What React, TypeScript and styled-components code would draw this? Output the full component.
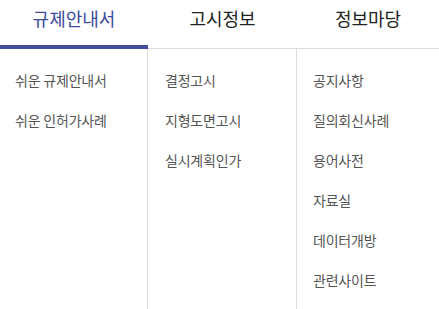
import React from 'react';
import styled, { createGlobalStyle } from 'styled-components';

const GlobalStyle = createGlobalStyle`
  html, body {
    margin: 0;
    padding: 0;
    background: #ffffff;
  }
  body {
    font-family: 'Noto Sans CJK KR', 'Noto Sans', sans-serif;
  }
`;

const Styled_Menu = styled.div`
  width: 439px;
  height: 309px;
  display: flex;
  flex-direction: column;
  overflow: hidden;
  background: #ffffff;
`;

const Styled_TabBar = styled.div`
  display: grid;
  grid-template-columns: 148px 149px 1fr;
  height: 49px;
  border-bottom: 1px solid #dcdcdc;
  box-sizing: border-box;
`;

interface Styled_TabProps {
  active?: boolean;
}

const Styled_Tab = styled.div<Styled_TabProps>`
  display: flex;
  justify-content: center;
  align-items: flex-start;
  padding-top: 5px;
  box-sizing: border-box;
  height: 49px;
  margin-bottom: -1px;
  font-size: 18px;
  font-weight: 400;
  color: ${({ active }) => (active ? '#3b4a9c' : '#222222')};
  border-bottom: ${({ active }) => (active ? '4px solid #414c9c' : 'none')};
`;

const Styled_Body = styled.div`
  flex: 1;
  display: grid;
  grid-template-columns: 147px 149px 1fr;
`;

interface Styled_ColumnProps {
  divided?: boolean;
  pad: number;
}

const Styled_Column = styled.ul<Styled_ColumnProps>`
  list-style: none;
  margin: 0;
  padding: 11px 0 0 ${({ pad }) => pad}px;
  border-left: ${({ divided }) => (divided ? '1px solid #dcdcdc' : 'none')};
`;

const Styled_Item = styled.li`
  height: 40px;
  line-height: 40px;
  font-size: 14px;
  color: #555555;
  letter-spacing: -0.2px;
  white-space: nowrap;
`;

const tabs = ['규제안내서', '고시정보', '정보마당'];

const columns = [
  { pad: 15, items: ['쉬운 규제안내서', '쉬운 인허가사례'] },
  { pad: 17, items: ['결정고시', '지형도면고시', '실시계획인가'] },
  { pad: 16, items: ['공지사항', '질의회신사례', '용어사전', '자료실', '데이터개방', '관련사이트'] },
];

export default function App() {
  return (
    <>
      <GlobalStyle />
      <Styled_Menu>
        <Styled_TabBar>
          {tabs.map((t, i) => (
            <Styled_Tab key={t} active={i === 0}>{t}</Styled_Tab>
          ))}
        </Styled_TabBar>
        <Styled_Body>
          {columns.map((c, i) => (
            <Styled_Column key={i} pad={c.pad} divided={i > 0}>
              {c.items.map(item => (
                <Styled_Item key={item}>{item}</Styled_Item>
              ))}
            </Styled_Column>
          ))}
        </Styled_Body>
      </Styled_Menu>
    </>
  );
}
